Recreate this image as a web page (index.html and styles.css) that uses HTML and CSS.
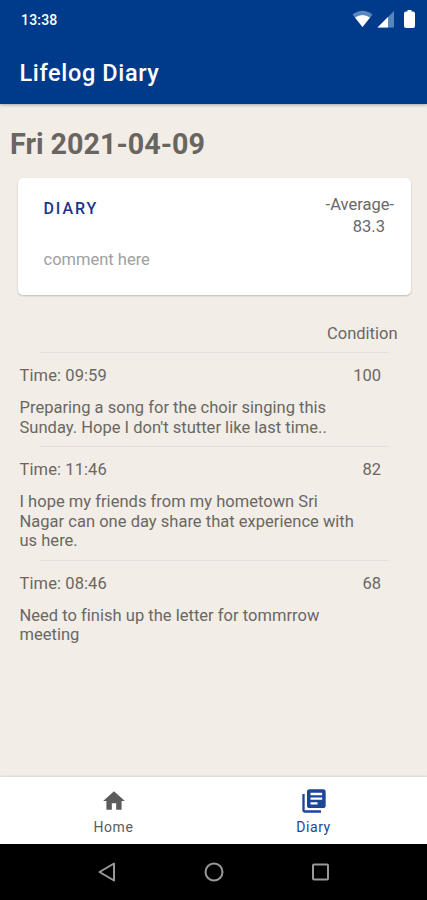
FILE: index.html
```html
<!DOCTYPE html>
<html lang="en">
<head>
<meta charset="utf-8">
<title>Lifelog Diary</title>
<link rel="stylesheet" href="styles.css">
</head>
<body>
<header class="top">
  <div class="status">
    <span class="clock">13:38</span>
    <svg class="status-icons" width="66" height="20" viewBox="0 0 66 20">
      <path d="M0.500 4.500Q10.500 -3 20.500 4.500L10.500 17Z" fill="#5688bd"/>
      <path d="M3 7.500Q10.500 2.500 18 7.500L10.500 17Z" fill="#fff"/>
      <path d="M25.500 17.500L42 1V17.500Z" fill="#5688bd"/>
      <path d="M25.500 17.500L36 7V17.500Z" fill="#fff"/>
      <path d="M55.500 1.500V0h4v1.500h1.500q2 0 2 2v12.500q0 2-2 2h-7q-2 0-2-2v-12.500q0-2 2-2z" fill="#fff"/>
    </svg>
  </div>
  <h1 class="title">Lifelog Diary</h1>
</header>
<main class="content">
  <h2 class="date">Fri 2021-04-09</h2>
  <section class="card">
    <div class="card-text">
      <h3 class="card-title">DIARY</h3>
      <p class="comment">comment here</p>
    </div>
    <div class="average"><span>-Average-</span><span class="score">83.3</span></div>
  </section>
  <div class="condition">Condition</div>
  <article class="entry">
    <div class="entry-head"><span class="time">Time: 09:59</span><span class="value">100</span></div>
    <p class="note">Preparing a song for the choir singing this<br>Sunday. Hope I don't stutter like last time..</p>
  </article>
  <article class="entry">
    <div class="entry-head"><span class="time">Time: 11:46</span><span class="value">82</span></div>
    <p class="note">I hope my friends from my hometown Sri<br>Nagar can one day share that experience with<br>us here.</p>
  </article>
  <article class="entry">
    <div class="entry-head"><span class="time">Time: 08:46</span><span class="value">68</span></div>
    <p class="note">Need to finish up the letter for tommrrow<br>meeting</p>
  </article>
</main>
<nav class="tabs">
  <a class="tab">
    <svg width="26" height="26" viewBox="0 0 24 24"><path d="M10 20v-6h4v6h5v-8h3L12 3 2 12h3v8z" fill="currentColor"/></svg>
    <span>Home</span>
  </a>
  <a class="tab active">
    <svg width="28" height="28" viewBox="0 0 24 24"><path d="M4 6H2v14c0 1.100.9 2 2 2h14v-2H4V6zm16-4H8c-1.100 0-2 .9-2 2v12c0 1.100.9 2 2 2h12c1.100 0 2-.9 2-2V4c0-1.100-.9-2-2-2zm-1 9H9V9h10v2zm-4 4H9v-2h6v2zm4-8H9V5h10v2z" fill="currentColor"/></svg>
    <span>Diary</span>
  </a>
</nav>
<footer class="system">
  <svg width="22" height="22" viewBox="0 0 22 22"><path d="M18 2.500V19.500L3.500 11Z"/></svg>
  <svg width="22" height="22" viewBox="0 0 22 22"><circle cx="11" cy="11" r="8.500"/></svg>
  <svg width="22" height="22" viewBox="0 0 22 22"><rect x="4" y="3.500" width="15" height="15" rx="1"/></svg>
</footer>
</body>
</html>
```
FILE: styles.css
```css
* { box-sizing: border-box; }
h1, h2, h3, p { margin: 0; font-weight: 400; }
body {
  margin: 0;
  height: 900px;
  display: flex;
  flex-direction: column;
  background: #f2ede7;
  color: #6a6763;
  font: 16.5px/22px Roboto, sans-serif;
}
.top {
  height: 104px;
  background: #003b8b;
  color: #fff;
  box-shadow: 0 1px 3px rgba(0, 0, 0, .3);
}
.status {
  height: 40px;
  padding: 0 9px 0 21px;
  display: flex;
  align-items: center;
  justify-content: space-between;
}
.clock { font-size: 14px; font-weight: 500; letter-spacing: .2px; }
.title { padding: 18px 0 0 19.5px; font-size: 23.5px; line-height: 30px; font-weight: 500; letter-spacing: .63px; }
.content { flex: 1; }
.date { padding: 23px 0 0 10px; font-size: 28.7px; line-height: 34px; font-weight: 700; color: #696661; }
.card {
  height: 117px;
  margin: 17px 16px 0 18px;
  padding: 16px 17px 0 25.5px;
  display: flex;
  justify-content: space-between;
  border-radius: 5px;
  background: #fff;
  box-shadow: 0 1px 2px rgba(0, 0, 0, .22);
}
.card-title { padding-top: 4px; font-size: 16px; font-weight: 500; letter-spacing: 1.9px; color: #1b358b; }
.comment { padding-top: 29px; color: #a0a0a0; }
.average { display: flex; flex-direction: column; align-items: flex-end; color: #686868; }
.score { padding-right: 9px; }
.condition { height: 57px; padding: 28px 29.5px 0 0; text-align: right; }
.entry { padding: 0 46px 9px 19.5px; }
.entry::before { content: ""; display: block; height: 1px; margin: 0 -8px 0 20px; background: #e4dfda; }
.entry-head { padding-top: 12px; display: flex; justify-content: space-between; }
.time { letter-spacing: .1px; }
.note { padding-top: 11px; line-height: 19.5px; letter-spacing: .02px; white-space: nowrap; }
.tabs { height: 67px; display: flex; justify-content: center; background: #fff; box-shadow: 0 -1px 2px rgba(0, 0, 0, .1); }
.tab { width: 200px; display: flex; flex-direction: column; align-items: center; color: #5b5b5b; font-size: 14px; line-height: 18px; letter-spacing: .6px; }
.tab svg { height: 28px; margin: 10px 0 3px; }
.active { color: #1b4796; }
.system { height: 56px; padding: 0 96px; display: flex; align-items: center; justify-content: space-between; background: #000; }
.system path, .system circle, .system rect { fill: none; stroke: #999; stroke-width: 2; stroke-linejoin: round; }
```
